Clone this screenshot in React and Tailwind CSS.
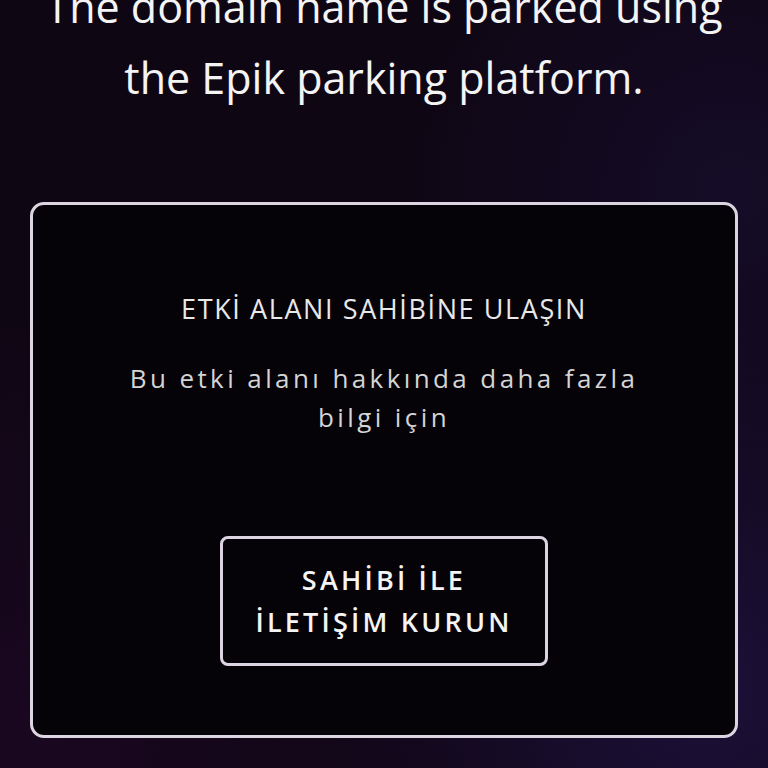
export default function App() {
    return (
        <div className="relative h-[768px] w-[768px] overflow-hidden bg-[#0f0614] text-center font-['Open_Sans',sans-serif]">
            {/* soft nebula glow behind the content */}
            <div className="absolute inset-0 bg-[radial-gradient(circle_at_92%_90%,#1c1038_0%,transparent_40%),radial-gradient(circle_at_5%_95%,#1a0720_0%,transparent_40%),radial-gradient(circle_at_95%_25%,#150c28_0%,transparent_35%)]" />
            <div className="relative flex flex-col items-center">
                <h1 className="mt-[-29px] px-8 text-[43px] leading-[71px] font-normal text-[#f4f4f4]">
                    The domain name is parked using
                    <br />
                    the Epik parking platform.
                </h1>
                <div className="mt-[89px] flex h-[536px] w-[708px] flex-col items-center rounded-[14px] border-[3px] border-[#dcd4e0] bg-[#050208]">
                    <h2 className="mt-[84px] text-[27px] leading-[40px] font-normal tracking-[1.6px] text-[#e8e8e8]">ETKİ ALANI SAHİBİNE ULAŞIN</h2>
                    <p className="mt-[30px] w-[580px] text-[26px] leading-[39px] tracking-[3.4px] text-[#d4d4d4]">
                        Bu etki alanı hakkında daha fazla bilgi için
                    </p>
                    <button className="mt-[99px] flex h-[130px] w-[328px] flex-col items-center justify-center rounded-[8px] border-[3px] border-[#dcd4e0] text-[27px] leading-[42px] font-semibold tracking-[3.2px] text-[#f4f4f4]">
                        <span>SAHİBİ İLE</span>
                        <span>İLETİŞİM KURUN</span>
                    </button>
                </div>
            </div>
        </div>
    );
}
